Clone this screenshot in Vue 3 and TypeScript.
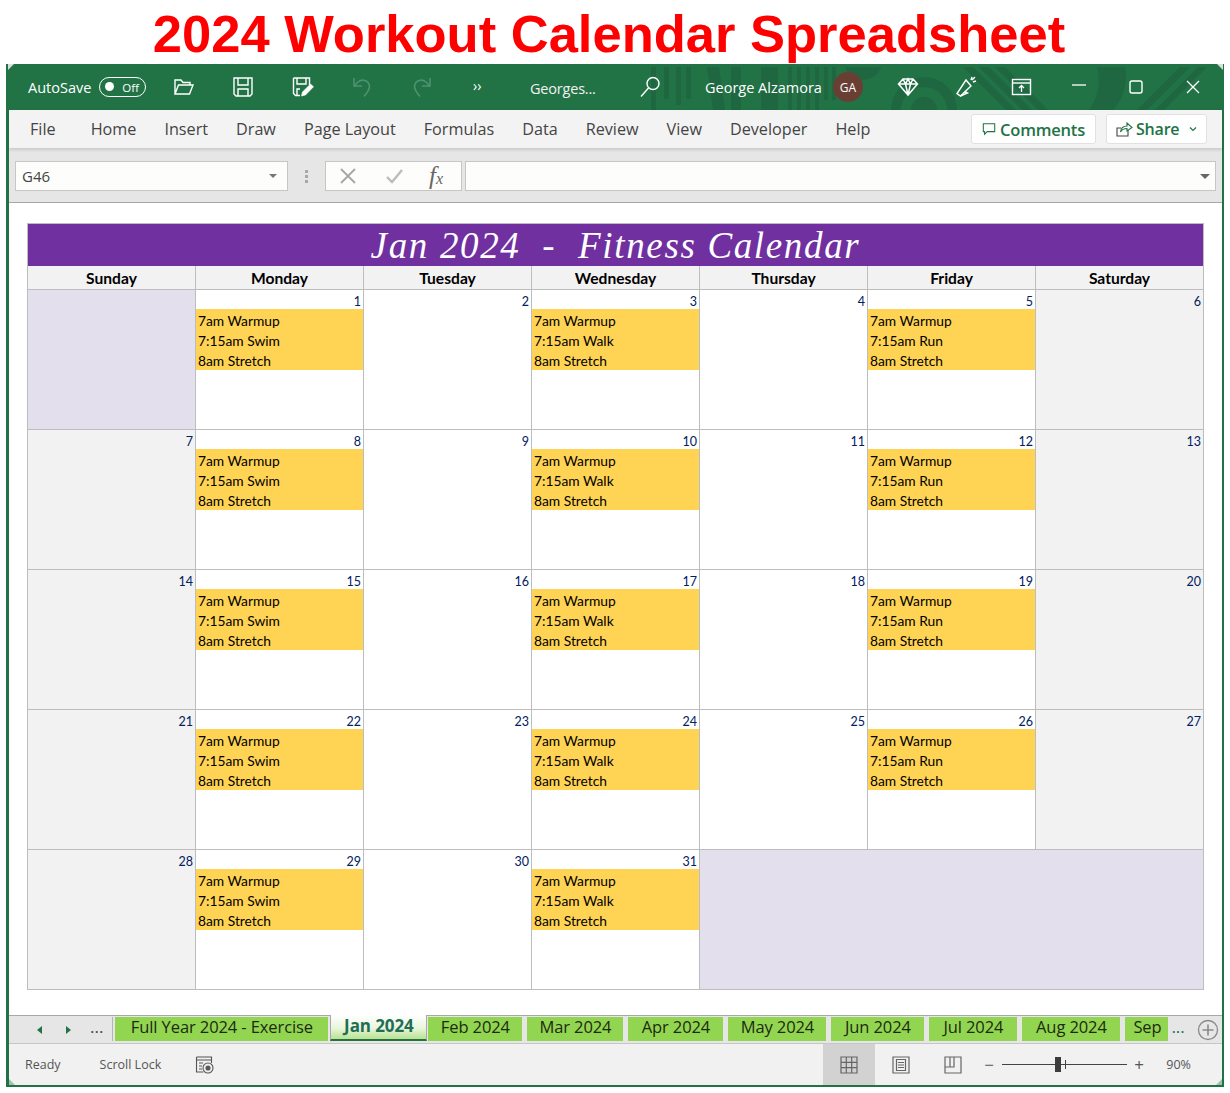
<script setup lang="ts">
interface Day {
  num?: number
  kind: 'empty' | 'weekend' | 'plain' | 'swim' | 'walk' | 'run'
  span?: number
}

const headers = ['Sunday', 'Monday', 'Tuesday', 'Wednesday', 'Thursday', 'Friday', 'Saturday']
const weekKinds: Day['kind'][] = ['weekend', 'swim', 'plain', 'walk', 'plain', 'run', 'weekend']

const days: Day[] = [{ kind: 'empty' }]
for (let n = 1; n <= 31; n++) {
  days.push({ num: n, kind: weekKinds[n % 7] })
}
days.push({ kind: 'empty', span: 3 })

const secondLine: Record<string, string> = {
  swim: '7:15am Swim',
  walk: '7:15am Walk',
  run: '7:15am Run'
}

const menu = ['File', 'Home', 'Insert', 'Draw', 'Page Layout', 'Formulas', 'Data', 'Review', 'View', 'Developer', 'Help']

const sheets = [
  { name: 'Full Year 2024 - Exercise', width: 213 },
  { name: 'Jan 2024', width: 97, active: true },
  { name: 'Feb 2024', width: 94 },
  { name: 'Mar 2024', width: 96 },
  { name: 'Apr 2024', width: 95 },
  { name: 'May 2024', width: 98 },
  { name: 'Jun 2024', width: 93 },
  { name: 'Jul 2024', width: 88 },
  { name: 'Aug 2024', width: 98 },
  { name: 'Sep', width: 43, clipped: true }
]
</script>

<template>
  <div class="page">
    <h1 class="headline">2024 Workout Calendar Spreadsheet</h1>

    <div class="window">
      <header class="titlebar">
        <svg class="pattern" width="600" height="46" viewBox="0 0 600 46" fill="#1e5c3d" opacity="0.5">
          <rect x="10" y="3" width="5" height="43" />
          <rect x="23" y="3" width="5" height="32" />
          <rect x="35" y="3" width="5" height="38" />
          <rect x="45" y="3" width="5" height="32" />
          <path d="M66 3h12l6 43H72z" />
          <rect x="90" y="3" width="10" height="43" />
          <rect x="120" y="3" width="17" height="43" />
          <rect x="147" y="3" width="4" height="43" />
          <rect x="156" y="3" width="4" height="43" />
          <rect x="165" y="3" width="4" height="43" />
          <rect x="174" y="3" width="4" height="43" />
          <rect x="183" y="3" width="4" height="33" />
          <rect x="191" y="3" width="4" height="33" />
          <path d="M204 3h36a19 19 0 0 1-36 0z" />
          <path d="M250 46a33 33 0 0 1 66 0h-10a23 23 0 0 0-46 0z" />
          <circle cx="283" cy="46" r="13" />
          <path d="M322 3h10l43 43h-10zM338 3h10l43 43h-10zM354 3h10l43 43h-10z" />
          <path d="M456 3h28a50 50 0 0 1-12 43h-24a50 50 0 0 0 8-43z" />
          <path d="M496 46l43-43h10l-43 43zM514 46l43-43h9l-43 43z" />
        </svg>

        <span class="autosave">AutoSave</span>
        <span class="toggle"><i class="knob"></i>Off</span>

        <div class="qat">
          <span class="slot">
            <svg width="22" height="20" viewBox="0 0 22 20" fill="none" stroke="#fff" stroke-width="1.4">
              <path d="M2 17V3h6l2 2.500h7V8M2 17h14.500L20 8H5.500L2 17z" />
            </svg>
          </span>
          <span class="slot">
            <svg width="22" height="22" viewBox="0 0 22 22" fill="none" stroke="#fff" stroke-width="1.4">
              <path d="M2 2h18v16l-2 2H4l-2-2z" />
              <path d="M6 2v7h10V2M6 20v-7h10v7" />
            </svg>
          </span>
          <span class="slot">
            <svg width="22" height="22" viewBox="0 0 22 22" fill="none" stroke="#fff" stroke-width="1.4">
              <path d="M1.500 2h16v7M8 19.500H3.500l-2-2V2M5 2v6h9V2M5 19v-6h3" />
              <path d="M9.500 20l1-4 8-8 3 2.800-8 8.200z" fill="#fff" stroke-width="0.6" />
            </svg>
          </span>
          <span class="slot">
            <svg width="22" height="22" viewBox="0 0 22 22" fill="none" stroke="#4f9170" stroke-width="1.6">
              <path d="M3 2v8h8M3 10l4-4a7 7 0 0 1 10 .500c3 3.500 1.500 8-4 14" />
            </svg>
          </span>
          <span class="slot">
            <svg width="22" height="22" viewBox="0 0 22 22" fill="none" stroke="#4f9170" stroke-width="1.6">
              <path d="M19 2v8h-8M19 10l-4-4a7 7 0 0 0-10 .500c-3 3.500-1.500 8 4 14" />
            </svg>
          </span>
          <span class="slot more">››</span>
        </div>

        <span class="filename">Georges...</span>
        <svg class="search" width="24" height="24" viewBox="0 0 24 24" fill="none" stroke="#fff" stroke-width="1.4">
          <circle cx="15" cy="8.500" r="6" />
          <path d="M10.500 13L3 21.500" />
        </svg>
        <span class="username">George Alzamora</span>
        <span class="avatar">GA</span>

        <div class="winbtns">
          <span class="slot">
            <svg width="22" height="20" viewBox="0 0 22 20" fill="none" stroke="#fff" stroke-width="1.5">
              <path d="M6 2h10l4.500 5L11 18 1.500 7zM1.500 7h19M6 2l2.500 5L11 18l2.500-11L16 2M8.500 7L11 2l2.500 5" />
            </svg>
          </span>
          <span class="slot">
            <svg width="24" height="24" viewBox="0 0 24 24" fill="none" stroke="#fff" stroke-width="1.4">
              <path d="M13 5L4 18.500l3.500 2.500L18 11z" />
              <path d="M7.500 21l7-3-3-1.500M19 2l-1 3M23 6l-3 1M22 2l-3 3" />
            </svg>
          </span>
          <span class="slot">
            <svg width="22" height="18" viewBox="0 0 22 18" fill="none" stroke="#fff" stroke-width="1.4">
              <rect x="1.500" y="1.500" width="18" height="15" />
              <path d="M1.500 5h18" />
              <path d="M10.500 14V8M8 10l2.500-2.500L13 10" stroke-width="1.300" />
            </svg>
          </span>
          <span class="slot">
            <svg width="16" height="16" viewBox="0 0 16 16" stroke="#fff" stroke-width="1.300"><path d="M1 6h14" /></svg>
          </span>
          <span class="slot">
            <svg width="16" height="16" viewBox="0 0 16 16" fill="none" stroke="#fff" stroke-width="1.400">
              <rect x="2" y="2" width="12" height="12" rx="2" />
            </svg>
          </span>
          <span class="slot">
            <svg width="16" height="16" viewBox="0 0 16 16" stroke="#fff" stroke-width="1.300"><path d="M2 2l12 12M14 2L2 14" /></svg>
          </span>
        </div>
      </header>

      <nav class="ribbon">
        <span v-for="item in menu" :key="item" class="menu-item">{{ item }}</span>
        <button class="rib-btn comments">
          <svg width="16" height="16" viewBox="0 0 16 16" fill="none" stroke="#217346" stroke-width="1.200">
            <path d="M1.500 2h13v9H6l-3 3v-3H1.500z" />
          </svg>
          Comments
        </button>
        <button class="rib-btn share">
          <svg width="18" height="18" viewBox="0 0 18 18" fill="none" stroke="#444" stroke-width="1.100">
            <path d="M13 10v6H2V8h4" />
            <path d="M5.500 12c.5-4 3-6 6.500-6V3l5 4.500L12 11V8.500c-3 0-5 1-6.500 3.500z" stroke="#217346" />
          </svg>
          Share
          <svg class="chev" width="10" height="8" viewBox="0 0 10 8" fill="none" stroke="#217346" stroke-width="1.200">
            <path d="M2 2.500l3 3 3-3" />
          </svg>
        </button>
      </nav>

      <section class="formula">
        <div class="namebox">
          <span>G46</span>
          <i class="caret"></i>
        </div>
        <div class="grip"><i></i><i></i><i></i></div>
        <div class="fx-buttons">
          <svg width="18" height="18" viewBox="0 0 18 18" stroke="#a6a6a6" stroke-width="1.800"><path d="M2 2l14 14M16 2L2 16" /></svg>
          <svg width="18" height="18" viewBox="0 0 18 18" fill="none" stroke="#bcbcbc" stroke-width="2.400"><path d="M2 10l5 5L17 3" /></svg>
          <span class="fx">f<small>x</small></span>
        </div>
        <div class="fx-input"><i class="caret dark"></i></div>
      </section>

      <main class="sheet">
        <div class="calendar">
          <div class="cal-title">Jan 2024&nbsp; - &nbsp;Fitness Calendar</div>
          <div v-for="name in headers" :key="name" class="day-head">{{ name }}</div>
          <div
            v-for="(day, i) in days"
            :key="i"
            class="day"
            :class="[day.kind, day.span ? 'wide' : '']"
          >
            <div v-if="day.num" class="num">{{ day.num }}</div>
            <div v-if="secondLine[day.kind]" class="events">
              <div>7am Warmup</div>
              <div>{{ secondLine[day.kind] }}</div>
              <div>8am Stretch</div>
            </div>
          </div>
        </div>
      </main>

      <div class="tabstrip">
        <span class="tri left"></span>
        <span class="tri right"></span>
        <span class="dots first">...</span>
        <i class="tab-sep"></i>
        <div class="tabs">
          <span
            v-for="sheet in sheets"
            :key="sheet.name"
            class="tab"
            :class="{ active: sheet.active, clipped: sheet.clipped }"
            :style="{ width: sheet.width + 'px' }"
          >{{ sheet.name }}</span>
        </div>
        <span class="dots last">...</span>
        <svg class="add" width="22" height="22" viewBox="0 0 22 22" fill="none" stroke="#8a8a8a" stroke-width="1.300">
          <circle cx="11" cy="11" r="9.500" />
          <path d="M11 5.500v11M5.500 11h11" stroke-width="1.600" />
        </svg>
      </div>

      <footer class="status">
        <span class="ready">Ready</span>
        <span class="scroll">Scroll Lock</span>
        <svg class="macro" width="20" height="20" viewBox="0 0 20 20" fill="none" stroke="#555" stroke-width="1.100">
          <path d="M1.500 2h15v6M1.500 2v15h7M1.500 5h15" />
          <path d="M4 8h4M4 11h3M4 14h3" />
          <circle cx="13" cy="13" r="5" />
          <circle cx="13" cy="13" r="2" fill="#555" />
        </svg>
        <div class="views">
          <span class="view on">
            <svg width="18" height="18" viewBox="0 0 18 18" fill="none" stroke="#666" stroke-width="1.200">
              <path d="M1 1h16v16H1zM1 6.300h16M1 11.700h16M6.300 1v16M11.700 1v16" />
            </svg>
          </span>
          <span class="view">
            <svg width="18" height="18" viewBox="0 0 18 18" fill="none" stroke="#666" stroke-width="1.200">
              <path d="M1 1h16v16H1zM4.500 3.500h9v11h-9zM6 6.500h6M6 9h6M6 11.500h6" />
            </svg>
          </span>
          <span class="view">
            <svg width="18" height="18" viewBox="0 0 18 18" fill="none" stroke="#666" stroke-width="1.200">
              <path d="M1 1h16v16H1zM1 11h9V1M6 1v10" />
            </svg>
          </span>
        </div>
        <div class="zoom">
          <span class="sign">−</span>
          <div class="slider"><i class="tick"></i><i class="thumb"></i></div>
          <span class="sign">+</span>
          <span class="pct">90%</span>
        </div>
      </footer>

      <i class="corner tl"></i>
      <i class="corner tr"></i>
      <i class="corner bl"></i>
      <i class="corner br"></i>
    </div>
  </div>
</template>

<style>
html,
body {
  margin: 0;
  background: #fff;
}
</style>

<style scoped>
.page {
  width: 1230px;
  height: 1093px;
  overflow: hidden;
}

.headline {
  margin: 0;
  height: 64px;
  padding-right: 12px;
  text-align: center;
  font: bold 52.500px/67px "Liberation Sans", Arial, sans-serif;
  color: #fe0000;
  white-space: nowrap;
}

.window {
  position: relative;
  width: 1218px;
  height: 1023px;
  margin-left: 6px;
  box-sizing: border-box;
  border: solid #217346;
  border-width: 0 2px 2px 3px;
  display: flex;
  flex-direction: column;
  background: #fff;
  font-family: "Open Sans", "Noto Sans", sans-serif;
}

.titlebar {
  position: relative;
  flex: none;
  height: 46px;
  display: flex;
  align-items: center;
  background: #217346;
  color: #fff;
  padding-left: 19px;
  font-size: 14.500px;
  white-space: nowrap;
}

.pattern {
  position: absolute;
  left: 632px;
  top: 0;
}

.titlebar > span,
.titlebar > div,
.titlebar > svg:not(.pattern) {
  position: relative;
}

.autosave {
  width: 63px;
}

.toggle {
  margin-left: 8px;
  width: 47px;
  height: 20px;
  box-sizing: border-box;
  border: 1.400px solid #fff;
  border-radius: 10px;
  display: flex;
  align-items: center;
  justify-content: flex-end;
  padding-right: 6px;
  font-size: 11.500px;
}

.knob {
  position: absolute;
  left: 5px;
  top: 4px;
  width: 9px;
  height: 9px;
  border-radius: 50%;
  background: #fff;
}

.qat,
.winbtns {
  display: flex;
  align-items: center;
}

.qat {
  margin-left: 8px;
}

.qat .slot {
  width: 59.500px;
}

.slot {
  display: flex;
  justify-content: center;
  align-items: center;
  height: 30px;
}

.more {
  font-size: 14px;
  padding: 0 8px 3px 0;
  box-sizing: border-box;
}

.filename {
  margin-left: 19px;
  width: 66px;
  color: #f1f1f1;
  padding-top: 2px;
  letter-spacing: -0.2px;
}

.search {
  margin-left: 42px;
}

.username {
  margin-left: 43px;
  width: 118px;
}

.avatar {
  margin-left: 10px;
  width: 30px;
  height: 30px;
  border-radius: 50%;
  background: #693f34;
  font-size: 12px;
  display: flex;
  align-items: center;
  justify-content: center;
  flex: none;
}

.winbtns {
  margin-left: 16px;
}

.winbtns .slot {
  width: 57px;
}

.ribbon {
  flex: none;
  height: 38px;
  box-sizing: border-box;
  display: flex;
  align-items: center;
  background: #f3f3f3;
  padding: 0 15px 0 21px;
  color: #444;
  font-size: 16.200px;
  box-shadow: 0 2px 3px rgba(0, 0, 0, 0.12);
  position: relative;
}

.menu-item {
  margin-right: 28px;
  white-space: nowrap;
}

.menu-item:first-child {
  margin-right: 35px;
}

.rib-btn {
  height: 30px;
  box-sizing: border-box;
  border: 1px solid #e1e1e1;
  border-radius: 3px;
  background: #fff;
  display: flex;
  align-items: center;
  gap: 4px;
  padding: 0 10px;
  color: #217346;
  font: 600 16.500px "Open Sans", sans-serif;
  letter-spacing: -0.2px;
}

.comments {
  width: 125px;
  margin-left: auto;
}

.share {
  width: 101px;
  margin-left: 10px;
  padding: 0 0 0 8px;
  gap: 3px;
  font-size: 16px;
}

.chev {
  margin-left: 6px;
}

.formula {
  flex: none;
  height: 55px;
  box-sizing: border-box;
  background: #e6e6e6;
  border-bottom: 1px solid #a8a8a8;
  display: flex;
  align-items: flex-start;
  padding: 13px 6px 0;
}

.namebox,
.fx-buttons,
.fx-input {
  height: 30px;
  box-sizing: border-box;
  background: #fdfdfb;
  border: 1px solid #c6c6c6;
  display: flex;
  align-items: center;
}

.namebox {
  width: 273px;
  padding: 0 10px 0 6px;
  justify-content: space-between;
  font-size: 15px;
  color: #444;
}

.caret {
  width: 0;
  height: 0;
  border: 4px solid transparent;
  border-top: 4px solid #777;
  border-bottom: 0;
}

.caret.dark {
  border-width: 5px 5px 0;
  border-top-color: #666;
  margin-left: auto;
}

.grip {
  width: 37px;
  height: 30px;
  display: flex;
  flex-direction: column;
  align-items: center;
  justify-content: center;
  gap: 2px;
}

.grip i {
  width: 3px;
  height: 3px;
  background: #a8a8a8;
}

.fx-buttons {
  width: 137px;
  padding-left: 13px;
  gap: 28px;
}

.fx {
  font: italic 25px "Liberation Serif", serif;
  color: #666;
  margin-left: -2px;
}

.fx small {
  font-size: 16px;
}

.fx-input {
  width: 751px;
  margin-left: 3px;
  padding-right: 5px;
}

.sheet {
  flex: none;
  height: 812px;
  box-sizing: border-box;
  padding: 20px 0 0 18px;
  background: #fff;
}

.calendar {
  display: grid;
  width: 1177px;
  grid-template-columns: repeat(7, 168px);
  grid-template-rows: 42px 24px repeat(5, 140px);
  border-top: 1px solid #bdbdbd;
  border-left: 1px solid #bdbdbd;
  box-sizing: border-box;
  font-family: Lato, "Open Sans", sans-serif;
  color: #000;
}

.cal-title {
  grid-column: 1 / -1;
  background: #7030a0;
  border-right: 1px solid #bdbdbd;
  color: #fff;
  text-align: center;
  font: italic 37px/43px "Liberation Serif", "DejaVu Serif", serif;
  letter-spacing: 1.650px;
  white-space: nowrap;
}

.day-head {
  background: #f2f2f2;
  border-right: 1px solid #bdbdbd;
  border-bottom: 1px solid #bdbdbd;
  text-align: center;
  font-weight: 700;
  font-size: 15.600px;
  line-height: 24px;
}

.day {
  border-right: 1px solid #bdbdbd;
  border-bottom: 1px solid #bdbdbd;
  background: #fff;
  min-width: 0;
}

.day.empty {
  background: #e3dfed;
}

.day.weekend {
  background: #f2f2f2;
}

.day.wide {
  grid-column: span 3;
}

.num {
  height: 19px;
  text-align: right;
  padding-right: 2px;
  font-size: 12.500px;
  line-height: 24px;
  color: #002060;
}

.events {
  background: #ffd354;
  padding: 2px 0 0 2px;
  height: 61px;
  box-sizing: border-box;
  font-size: 13.800px;
  line-height: 20px;
}

.tabstrip {
  flex: none;
  height: 29px;
  box-sizing: border-box;
  background: #e6e6e6;
  border-top: 1px solid #a8a8a8;
  border-bottom: 1px solid #c6c6c6;
  display: flex;
  align-items: flex-start;
  padding-left: 28px;
  position: relative;
}

.tri {
  width: 0;
  height: 0;
  margin-top: 10px;
  border: 4.500px solid transparent;
}

.tri.left {
  border-left: 0;
  border-right: 5px solid #217346;
}

.tri.right {
  margin-left: 24px;
  border-right: 0;
  border-left: 5px solid #217346;
}

.dots {
  color: #444;
  font-size: 17px;
  line-height: 22px;
}

.dots.first {
  margin-left: 19px;
}

.tab-sep {
  width: 1px;
  height: 24px;
  margin: 1px 2px 0 9px;
  background: #b5b5b5;
}

.tabs {
  display: flex;
  gap: 5px;
  padding-top: 1px;
  height: 25px;
  width: 1053px;
  flex: none;
}

.tab {
  flex: none;
  height: 24px;
  background: #92d550;
  text-align: center;
  font-size: 16.500px;
  line-height: 20px;
  color: #1d2a12;
  letter-spacing: -0.1px;
  white-space: nowrap;
}

.tab.active {
  margin: -2px -4px 0 -3px;
  height: 26px;
  box-sizing: border-box;
  background: linear-gradient(#fff, #e9f5dc 55%, #b9e38f);
  border: 1px solid #a8a8a8;
  border-top: 0;
  border-bottom: 2px solid #217346;
  color: #1f6e56;
  font-weight: 700;
  font-size: 17px;
  line-height: 22px;
  z-index: 1;
}

.tab.clipped {
  text-align: left;
  padding-left: 8px;
  box-sizing: border-box;
}

.dots.last {
  margin-left: 3px;
  color: #217346;
}

.add {
  margin: 3px 0 0 12px;
}

.status {
  flex: none;
  flex-grow: 1;
  display: flex;
  align-items: center;
  background: #f1f1f1;
  padding-left: 16px;
  font-size: 12.500px;
  color: #555;
}

.scroll {
  margin-left: 39px;
}

.macro {
  margin-left: 34px;
}

.views {
  margin-left: 608px;
  display: flex;
  height: 100%;
}

.view {
  width: 52px;
  display: flex;
  align-items: center;
  justify-content: center;
}

.view.on {
  background: #d2d2d2;
}

.zoom {
  display: flex;
  align-items: center;
  margin-left: 3px;
}

.sign {
  font-size: 17px;
  width: 14px;
  text-align: center;
}

.slider {
  position: relative;
  width: 125px;
  height: 1px;
  margin: 0 5px 0 6px;
  background: #444;
}

.tick {
  position: absolute;
  left: 63px;
  top: -4px;
  width: 1px;
  height: 9px;
  background: #444;
}

.thumb {
  position: absolute;
  left: 53px;
  top: -7px;
  width: 6px;
  height: 15px;
  background: #3c3c3c;
}

.pct {
  margin-left: 20px;
  color: #555;
}

.corner {
  position: absolute;
  width: 6px;
  height: 6px;
  background: #dcdcdc;
}

.corner.tl {
  left: -1px;
  top: 0;
  clip-path: polygon(0 0, 100% 0, 0 100%);
}

.corner.tr {
  right: -1px;
  top: 0;
  clip-path: polygon(0 0, 100% 0, 100% 100%);
}

.corner.bl {
  left: 0;
  bottom: 0;
  clip-path: polygon(0 0, 100% 100%, 0 100%);
  background: #9cc3ad;
}

.corner.br {
  right: 0;
  bottom: 0;
  clip-path: polygon(100% 0, 100% 100%, 0 100%);
  background: #9cc3ad;
}
</style>
